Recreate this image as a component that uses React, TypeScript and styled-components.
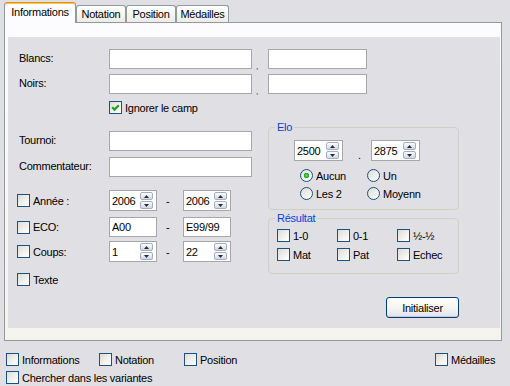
import styled, { createGlobalStyle } from "styled-components";

const GlobalStyle = createGlobalStyle`
  html, body {
    margin: 0;
    padding: 0;
    background: #e0dfe3;
  }
`;

function CheckBox({ checked }: { checked?: boolean }) {
  return (
    <Box>
      {checked && (
        <svg width="11" height="11" viewBox="0 0 11 11">
          <path d="M2.2 5.2 L4.5 7.6 L8.8 3.2" fill="none" stroke="#21a121" strokeWidth="2.2" />
        </svg>
      )}
    </Box>
  );
}

function Check({ label, checked, w }: { label: string; checked?: boolean; w?: number }) {
  return (
    <CheckItem $w={w}>
      <CheckBox checked={checked} />
      <span>{label}</span>
    </CheckItem>
  );
}

function Radio({ label, checked }: { label: string; checked?: boolean }) {
  return (
    <CheckItem>
      <RadioDot $checked={checked} />
      <span>{label}</span>
    </CheckItem>
  );
}

function Arrow({ up }: { up?: boolean }) {
  return (
    <svg width="5" height="3" viewBox="0 0 5 3">
      <polygon points={up ? "0,3 5,3 2.5,0" : "0,0 5,0 2.5,3"} fill="#2b2b2b" />
    </svg>
  );
}

function Spin({ value, w = 48 }: { value: string; w?: number }) {
  return (
    <SpinBox $w={w}>
      <SpinValue>{value}</SpinValue>
      <SpinButtons>
        <SpinButton>
          <Arrow up />
        </SpinButton>
        <SpinButton>
          <Arrow />
        </SpinButton>
      </SpinButtons>
    </SpinBox>
  );
}

export default function App() {
  return (
    <Window>
      <GlobalStyle />
      <TabStrip>
        <Tab $active $w={72}>Informations</Tab>
        <Tab $w={50}>Notation</Tab>
        <Tab $w={50}>Position</Tab>
        <Tab $w={53}>Médailles</Tab>
      </TabStrip>
      <Panel>
        <Page>
          <Row>
            <FieldLabel>Blancs:</FieldLabel>
            <TextBox $w={143} readOnly />
            <Sep $w={16} $pl={4} $lh={36} $fs={8}>,</Sep>
            <TextBox $w={99} readOnly />
          </Row>
          <Row $mt={5}>
            <FieldLabel>Noirs:</FieldLabel>
            <TextBox $w={143} readOnly />
            <Sep $w={16} $pl={4} $lh={36} $fs={8}>,</Sep>
            <TextBox $w={99} readOnly />
          </Row>
          <Row $mt={7} $pl={90}>
            <Check label="Ignorer le camp" checked />
          </Row>

          <Columns>
            <LeftCol>
              <Row>
                <FieldLabel>Tournoi:</FieldLabel>
                <TextBox $w={143} readOnly />
              </Row>
              <Row $mt={6}>
                <FieldLabel>Commentateur:</FieldLabel>
                <TextBox $w={143} readOnly />
              </Row>
              <Row $mt={13}>
                <RowCheck>
                  <Check label="Année :" />
                </RowCheck>
                <Spin value="2006" />
                <Sep $w={26} $pl={9} $lh={21}>-</Sep>
                <Spin value="2006" />
              </Row>
              <Row $mt={6}>
                <RowCheck>
                  <Check label="ECO:" />
                </RowCheck>
                <TextBox $w={48} defaultValue="A00" readOnly />
                <Sep $w={26} $pl={9} $lh={20}>-</Sep>
                <TextBox $w={48} defaultValue="E99/99" readOnly />
              </Row>
              <Row $mt={4}>
                <RowCheck>
                  <Check label="Coups:" />
                </RowCheck>
                <Spin value="1" />
                <Sep $w={26} $pl={9} $lh={21}>-</Sep>
                <Spin value="22" />
              </Row>
              <Row $mt={11}>
                <RowCheck>
                  <Check label="Texte" />
                </RowCheck>
              </Row>
            </LeftCol>

            <RightCol>
              <GroupBox $pb={9}>
                <Legend>Elo</Legend>
                <Row $mt={7} $pl={25}>
                  <Spin value="2500" w={49} />
                  <Sep $w={28} $pl={15} $lh={29}>.</Sep>
                  <Spin value="2875" w={49} />
                </Row>
                <RadioGrid>
                  <Radio label="Aucun" checked />
                  <Radio label="Un" />
                  <Radio label="Les 2" />
                  <Radio label="Moyenn" />
                </RadioGrid>
              </GroupBox>
              <GroupBox $pb={12} $mt={2}>
                <Legend>Résultat</Legend>
                <ResultGrid>
                  <Check label="1-0" />
                  <Check label="0-1" />
                  <Check label="½-½" />
                  <Check label="Mat" />
                  <Check label="Pat" />
                  <Check label="Echec" />
                </ResultGrid>
              </GroupBox>
              <InitButton>Initialiser</InitButton>
            </RightCol>
          </Columns>
        </Page>
      </Panel>

      <Options>
        <Check label="Informations" />
        <Check label="Notation" />
        <Check label="Position" />
        <Check label="Médailles" />
        <Wide>
          <Check label="Chercher dans les variantes" />
        </Wide>
      </Options>
    </Window>
  );
}

const Window = styled.div`
  width: 510px;
  height: 386px;
  overflow: hidden;
  background: #e0dfe3;
  color: #000;
  font-family: "Liberation Sans", Arial, sans-serif;
  font-size: 11px;
  letter-spacing: -0.25px;
`;

const TabStrip = styled.div`
  position: relative;
  z-index: 1;
  display: flex;
  align-items: flex-end;
  height: 23px;
  margin-bottom: -1px;
  padding-left: 4px;
`;

const Tab = styled.div<{ $active?: boolean; $w: number }>`
  width: ${(p) => p.$w}px;
  height: ${(p) => (p.$active ? 21 : 17)}px;
  margin-bottom: ${(p) => (p.$active ? 0 : 1)}px;
  box-sizing: border-box;
  display: flex;
  align-items: center;
  justify-content: center;
  padding-bottom: ${(p) => (p.$active ? 2 : 0)}px;
  white-space: nowrap;
  border: 1px solid #919b9c;
  border-bottom: none;
  border-radius: 3px 3px 0 0;
  background: ${(p) => (p.$active ? "#fcfcfe" : "linear-gradient(#ffffff, #ecebe6)")};
  border-top-color: ${(p) => (p.$active ? "#e68b2c" : "#919b9c")};
  box-shadow: ${(p) => (p.$active ? "inset 0 1px 0 #ffc73c" : "none")};
`;

const Panel = styled.div`
  margin-left: 4px;
  width: 498px;
  height: 319px;
  box-sizing: border-box;
  border: 1px solid #919b9c;
  padding: 14px 1px 12px 3px;
  background: linear-gradient(#fcfcfe, #f4f3ee);
`;

const Page = styled.div`
  height: 100%;
  box-sizing: border-box;
  padding: 12px 0 0 11px;
  background: #e0dfe3;
`;

const Row = styled.div<{ $mt?: number; $pl?: number }>`
  display: flex;
  align-items: center;
  margin-top: ${(p) => p.$mt ?? 0}px;
  padding-left: ${(p) => p.$pl ?? 0}px;
`;

const FieldLabel = styled.span`
  flex: none;
  width: 90px;
  padding-bottom: 2px;
  white-space: nowrap;
`;

const RowCheck = styled.div`
  flex: none;
  width: 92px;
  margin-left: -2px;
`;

const TextBox = styled.input<{ $w: number }>`
  width: ${(p) => p.$w}px;
  height: 20px;
  box-sizing: border-box;
  margin: 0;
  padding: 0 0 0 2px;
  border: 1px solid #a7a6aa;
  background: #fff;
  font: inherit;
  letter-spacing: inherit;
  color: #000;
  outline: none;
`;

const Sep = styled.span<{ $w: number; $pl: number; $lh: number; $fs?: number }>`
  flex: none;
  width: ${(p) => p.$w}px;
  height: 20px;
  box-sizing: border-box;
  padding-left: ${(p) => p.$pl}px;
  font-size: ${(p) => p.$fs ?? 11}px;
  line-height: ${(p) => p.$lh}px;
  overflow: visible;
`;

const CheckItem = styled.label<{ $w?: number }>`
  display: flex;
  align-items: center;
  gap: 3px;
  height: 13px;
  white-space: nowrap;
  ${(p) => (p.$w ? `width: ${p.$w}px;` : "")}
`;

const Box = styled.span`
  flex: none;
  width: 13px;
  height: 13px;
  box-sizing: border-box;
  border: 1px solid #1c5180;
  background: linear-gradient(135deg, #dcdcd7 0%, #f6f6f3 70%, #ffffff 100%);
  display: flex;
  align-items: center;
  justify-content: center;
`;

const RadioDot = styled.span<{ $checked?: boolean }>`
  flex: none;
  width: 13px;
  height: 13px;
  box-sizing: border-box;
  border: 1px solid #1c5180;
  border-radius: 50%;
  background: ${(p) =>
    p.$checked
      ? "radial-gradient(circle, #6edc6a 0, #21a121 2.5px, transparent 3px), linear-gradient(135deg, #dcdcd7, #ffffff)"
      : "linear-gradient(135deg, #dcdcd7, #ffffff)"};
`;

const SpinBox = styled.div<{ $w: number }>`
  flex: none;
  width: ${(p) => p.$w}px;
  height: 21px;
  box-sizing: border-box;
  display: flex;
  align-items: center;
  padding-left: 2px;
  border: 1px solid #a7a6aa;
  background: #fff;
`;

const SpinValue = styled.span`
  flex: 1;
`;

const SpinButtons = styled.div`
  display: flex;
  flex-direction: column;
  gap: 1px;
  margin-right: 3px;
`;

const SpinButton = styled.span`
  width: 13px;
  height: 8px;
  box-sizing: border-box;
  display: flex;
  align-items: center;
  justify-content: center;
  border: 1px solid #a3aec2;
  border-radius: 2px;
  background: linear-gradient(#fdfdfe, #cfd7e8);
`;

const Columns = styled.div`
  display: flex;
  margin-top: 7px;
`;

const LeftCol = styled.div`
  width: 249px;
  padding-top: 10px;
  box-sizing: border-box;
`;

const RightCol = styled.div`
  width: 191px;
  display: flex;
  flex-direction: column;
`;

const GroupBox = styled.fieldset<{ $pb: number; $mt?: number }>`
  margin: ${(p) => p.$mt ?? 0}px 0 0 0;
  padding: 0 0 ${(p) => p.$pb}px 0;
  min-width: 0;
  border: 1px solid #d0d0bf;
  border-radius: 4px;
`;

const Legend = styled.legend`
  margin-left: 6px;
  padding: 0 2px;
  line-height: 12px;
  color: #0046d5;
`;

const RadioGrid = styled.div`
  display: grid;
  grid-template-columns: 67px auto;
  row-gap: 5px;
  margin-top: 8px;
  padding-left: 31px;
`;

const ResultGrid = styled.div`
  display: grid;
  grid-template-columns: 60px 60px auto;
  row-gap: 6px;
  margin-top: 5px;
  padding-left: 8px;
`;

const InitButton = styled.button`
  align-self: flex-end;
  width: 73px;
  height: 21px;
  margin-top: 23px;
  padding: 0;
  border: 1px solid #003c74;
  border-radius: 3px;
  background: linear-gradient(#ffffff 0%, #f4f4f0 55%, #dfe3ee 100%);
  box-shadow: inset 0 -1px 0 #c5cbdc;
  font: inherit;
  letter-spacing: inherit;
  color: #000;
`;

const Options = styled.div`
  display: grid;
  grid-template-columns: 93px 85px 251px auto;
  row-gap: 5px;
  padding: 12px 0 0 6px;
`;

const Wide = styled.div`
  grid-column: 1 / -1;
`;
